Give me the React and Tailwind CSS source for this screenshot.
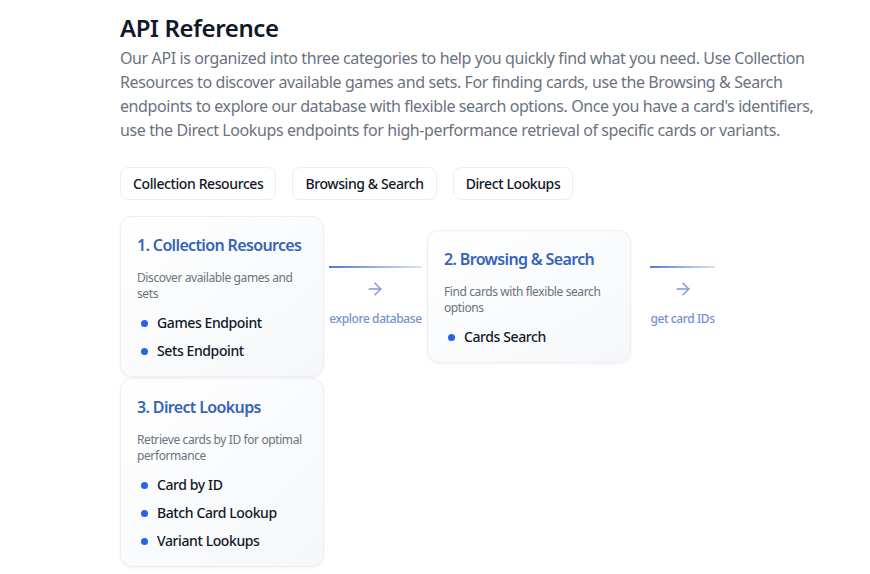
import React from "react";

const font = { fontFamily: '"Noto Sans", "Open Sans", sans-serif' };

function Card({ title, desc, items }) {
  return (
    <div className="w-[204px] shrink-0 rounded-xl border border-[#eceef2] bg-gradient-to-br from-white to-[#f5f7fa] px-4 pt-4 pb-[15px] shadow-[0_1px_3px_rgba(0,0,0,0.05)]">
      <h3 className="whitespace-nowrap text-[16px] leading-6 font-semibold tracking-[-0.04em] text-[#3563b9]">{title}</h3>
      <p className="mt-[13px] text-[12px] leading-4 text-[#6b7280]">{desc}</p>
      <ul className="mt-[11px] flex flex-col gap-2">
        {items.map((it) => (
          <li key={it} className="flex items-center gap-[9px] pl-1 text-[14px] leading-5 font-medium text-[#111827]">
            <span className="h-[7px] w-[7px] rounded-full bg-[#2563eb]" />
            {it}
          </li>
        ))}
      </ul>
    </div>
  );
}

function Connector({ label }) {
  return (
    <div className="flex w-[103px] shrink-0 justify-center">
      <div className="flex flex-col items-center">
        <div className="h-[2px] w-full bg-gradient-to-r from-[#5479c9] to-[#5479c9]/20" />
        <svg className="mt-[11px]" width="20" height="20" viewBox="0 0 24 24" fill="none" stroke="#7d9bd6" strokeWidth="1.8" strokeLinecap="round" strokeLinejoin="round">
          <path d="M5 12h14" />
          <path d="m12 5 7 7-7 7" />
        </svg>
        <span className="mt-[12px] text-[12px] leading-4 font-medium text-[#7391cf]">{label}</span>
      </div>
    </div>
  );
}

export default function App() {
  return (
    <div className="min-h-[574px] bg-white tracking-[-0.025em]" style={font}>
      <div className="w-[705px] pl-[120px] box-content pt-[12px]">
        <h1 className="text-[24px] leading-8 font-semibold text-[#111827]">API Reference</h1>
        <p className="mt-[2px] text-[16px] leading-6 text-[#6b7280]">
          Our API is organized into three categories to help you quickly find what you need. Use Collection Resources to discover available games and sets. For finding cards, use the Browsing &amp; Search endpoints to explore our database with flexible search options. Once you have a card's identifiers, use the Direct Lookups endpoints for high-performance retrieval of specific cards or variants.
        </p>
        <div className="mt-[25px] flex gap-4">
          {["Collection Resources", "Browsing & Search", "Direct Lookups"].map((t) => (
            <button key={t} className="h-[33px] rounded-lg border border-[#eceef2] bg-white px-3 text-[14px] font-medium text-[#111827]">
              {t}
            </button>
          ))}
        </div>
        <div className="mt-[16px] flex flex-wrap items-center gap-y-[1px]">
          <Card title="1. Collection Resources" desc="Discover available games and sets" items={["Games Endpoint", "Sets Endpoint"]} />
          <Connector label="explore database" />
          <Card title="2. Browsing & Search" desc="Find cards with flexible search options" items={["Cards Search"]} />
          <Connector label="get card IDs" />
          <Card title="3. Direct Lookups" desc="Retrieve cards by ID for optimal performance" items={["Card by ID", "Batch Card Lookup", "Variant Lookups"]} />
        </div>
      </div>
    </div>
  );
}
